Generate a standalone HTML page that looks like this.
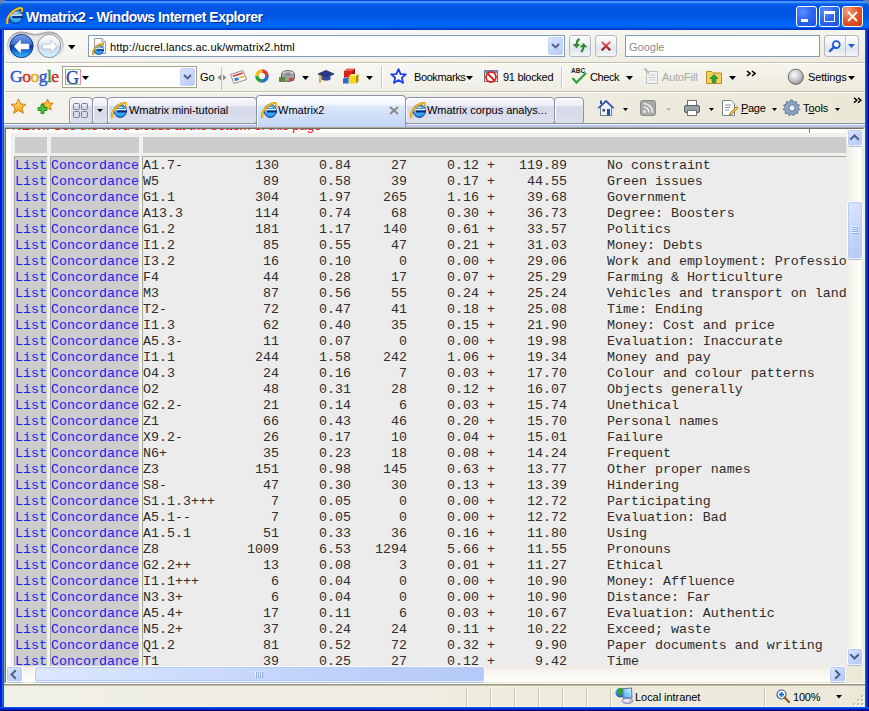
<!DOCTYPE html>
<html><head><meta charset="utf-8"><title>Wmatrix2 - Windows Internet Explorer</title>
<style>
*{margin:0;padding:0;box-sizing:border-box}
html,body{width:869px;height:711px;overflow:hidden}
body{position:relative;background:#0a3ed6;font-family:"Liberation Sans",sans-serif;font-size:11px;color:#000}
.a{position:absolute}
svg{position:absolute;overflow:visible}
/* title bar */
#title{left:0;top:0;width:869px;height:30px;border-radius:7px 7px 0 0;
background:linear-gradient(to bottom,#0a3ed6 0px,#0a3ed6 1px,#3d90fd 1px,#4196ff 3px,#2275f6 3px,#0d62ea 4px,#065ae6 5px,#0056e4 8px,#0054e2 13px,#0058e8 18px,#0063f6 22px,#0067fc 27px,#0050de 28px,#0038cb 29px,#0038cb 30px)}
#corner{left:0;top:0;width:869px;height:8px;background:#6e7ca4}
#ttext{left:26px;top:9px;font-weight:bold;font-size:14px;line-height:16px;color:#fff;white-space:nowrap;text-shadow:1px 1px 0 #0a2a90;letter-spacing:-0.45px}
.tbtn{top:6px;width:21px;height:21px;border:1px solid #fff;border-radius:3px;
background:radial-gradient(circle at 30% 25%,#5f8ffb 0%,#2f66f0 45%,#1b50e6 100%)}
#bclose{background:radial-gradient(circle at 25% 20%,#f4a080 0%,#e45a2c 45%,#cc3a10 100%)}
/* frame sides */
#fl{left:0;top:30px;width:4px;height:681px;background:linear-gradient(to right,#0019cf 0,#0019cf 2px,#166cf2 2px,#166cf2 3px,#0652e2 3px,#0652e2 4px)}
#fr{left:865px;top:30px;width:4px;height:681px;background:linear-gradient(to right,#0b55f2 0,#0b55f2 1px,#0040dc 1px,#0040dc 2px,#0020b0 2px,#0020b0 3px,#000c80 3px)}
#fb{left:0;top:707px;width:869px;height:4px;background:linear-gradient(to bottom,#0a54ee 0,#0a54ee 1px,#0038d8 1px,#0038d8 2px,#0018b0 2px,#0018b0 3px,#000c88 3px)}
/* toolbars */
#tb{left:4px;top:30px;width:861px;height:99px;background:linear-gradient(to right,#f3f2ed 0%,#eeede5 45%,#ebe8d7 100%)}
#addrrow{left:4px;top:30px;width:861px;height:32px;background:linear-gradient(to bottom,rgba(255,255,255,.5) 0,rgba(255,255,255,.15) 100%)}
.hl{height:1px;width:861px;left:4px}
#gbar{left:4px;top:63px;width:861px;height:28px;background:linear-gradient(to bottom,rgba(255,255,255,.55) 0,rgba(255,255,255,.1) 100%)}
#tabrow{left:4px;top:92px;width:861px;height:31px}
.ui{white-space:nowrap;font-size:11px;line-height:13px}
/* address */
#addr{left:88px;top:35px;width:477px;height:22px;background:#fff;border:1px solid #7f9db9}
#srch{left:625px;top:35px;width:195px;height:22px;background:#fff;border:1px solid #7f9db9}
.sbtn{border:1px solid #b4b7bf;border-radius:3px;background:linear-gradient(to bottom,#fdfdfd 0,#f1f2f5 35%,#dfe4ee 62%,#f4f5f8 100%)}
.ddb{background:linear-gradient(135deg,#d9e4fd 0,#b7cbf8 100%);border:1px solid #c5d4f6;border-radius:2px}
/* tabs */
.tab{top:97px;height:27px;border:1px solid #8d93a2;border-radius:4px 4px 3px 3px;background:linear-gradient(to bottom,#f8f9fc 0,#eceef5 30%,#d4d9e8 36%,#dde1ee 100%);box-shadow:inset 1px 1px 0 #fff}
#atab{top:95px;height:32px;border-bottom:none;border-radius:4px 4px 0 0;background:linear-gradient(to bottom,#ffffff 0,#f6f9fe 25%,#dbe6fa 35%,#c4d6f6 100%);border-color:#8d93a2}
/* content */
#cf{left:4px;top:127px;width:861px;height:557px;border-top:1px solid #aca899;border-left:1px solid #aca899;border-right:1px solid #f1efe2;border-bottom:1px solid #fff}
#cfi{left:5px;top:128px;width:859px;height:555px;border-top:1px solid #716f64;border-left:1px solid #716f64;border-right:1px solid #f1efe2;border-bottom:1px solid #f1efe2}
#view{left:6px;top:129px;width:840px;height:537px;background:#fff;overflow:hidden}
.mono{font-family:"Liberation Mono",monospace;font-size:13.333px;line-height:16px;white-space:pre}
#red{left:6px;top:-11px;color:#f00;font-size:13px;white-space:nowrap;font-family:"Liberation Sans",sans-serif}
#tbl{left:5px;top:4px;width:1200px;height:700px;background:#f0f0f0;border-top:1px solid #f1efe2;border-left:1px solid #f1efe2}
.hc{top:8px;height:16px;background:#cccccc}
.dc{top:27px;height:700px;border-top:1px solid #aca899;border-left:1px solid #aca899;border-right:1px solid #f1efe2}
/* scrollbars */
#vs{left:846px;top:129px;width:17px;height:537px;background:linear-gradient(to right,#eeeae0 0,#f6f4ee 5px,#fdfdf9 13px,#fdfdf9 16px,#e9e5d3 16px,#e9e5d3 17px)}
#hs{left:6px;top:666px;width:840px;height:17px;background:linear-gradient(to bottom,#eeeae0 0,#f6f4ee 5px,#fdfdf9 13px,#fdfdf9 16px,#e9e5d3 16px,#e9e5d3 17px)}
#corner2{left:846px;top:666px;width:17px;height:17px;background:#ece9d8}
.sb{border:1px solid #b8cbf5;border-radius:2px;background:linear-gradient(135deg,#dde8fe 0,#c6d6fb 50%,#b4c9f8 100%);box-shadow:0 0 0 1px rgba(255,255,255,.8),0 2px 0 0 #a9bedc}
/* status */
#status{left:4px;top:684px;width:861px;height:23px;border-top:1px solid #96937f;box-shadow:inset 0 1px 0 #c2bea9;border-bottom:1px solid #f5f3e8;background:linear-gradient(to right,#f1f0e8 0,#ece9d8 100%)}
.sep{top:688px;width:2px;height:18px;border-left:1px solid #c7c3b1;border-right:1px solid #fff}
</style></head><body>
<svg style="position:absolute;width:0;height:0" width="0" height="0"><defs>
<symbol id="ie" viewBox="0 0 16 16">
 <linearGradient id="ieg" x1="0" y1="0" x2="0" y2="1"><stop offset="0" stop-color="#8adcff"/><stop offset="1" stop-color="#1a90ea"/></linearGradient>
 <ellipse cx="9.3" cy="9" rx="6.2" ry="6.4" fill="url(#ieg)" stroke="#0a2a78" stroke-width=".9"/>
 <path d="M5.8 6.7C6.3 5 7.7 4.2 9.4 4.2S12.5 5 13 6.7Z" fill="#b8ecff" stroke="#0a3a90" stroke-width=".7"/>
 <path d="M4.4 7.5H15.4" stroke="#f0fbff" stroke-width="1.1"/>
 <path d="M6 9.5H15.7" stroke="#0a2a78" stroke-width="2"/>
 <path d="M1.9 16C.2 14.8.6 10.6 4.3 6.4 7.7 2.6 12.6.2 14.8 1.2c1.1.5.9 2-.2 3.5" stroke="#c8800a" stroke-width="2.3" fill="none"/>
 <path d="M1.9 16C.2 14.8.6 10.6 4.3 6.4 7.7 2.6 12.6.2 14.8 1.2c1.1.5.9 2-.2 3.5" stroke="#f8c828" stroke-width="1.3" fill="none"/>
</symbol></defs></svg>
<div class="a" id="corner"></div>
<div class="a" id="title"></div>
<svg style="left:6px;top:7px" width="17" height="17"><use href="#ie"/></svg>
<div class="a" id="ttext">Wmatrix2 - Windows Internet Explorer</div>
<div class="a tbtn" style="left:796px"><div class="a" style="left:4px;top:12px;width:7px;height:3px;background:#fff"></div></div>
<div class="a tbtn" style="left:819px"><div class="a" style="left:4px;top:4px;width:11px;height:11px;border:1px solid #fff;border-top-width:3px"></div></div>
<div class="a tbtn" id="bclose" style="left:842px"><svg style="left:4px;top:4px" width="11" height="11" viewBox="0 0 11 11"><path d="M1 1L10 10M10 1L1 10" stroke="#fff" stroke-width="1.8"/></svg></div>

<div class="a" id="fl"></div><div class="a" id="fr"></div><div class="a" id="fb"></div>
<div class="a" id="tb"></div>
<div class="a" id="addrrow"></div>
<div class="a hl" style="top:62px;background:#c5c1ad"></div>
<div class="a hl" style="top:63px;background:#fff"></div>
<div class="a" id="gbar"></div>
<div class="a hl" style="top:91px;background:#c5c1ad"></div>
<div class="a hl" style="top:92px;background:#fff"></div>
<div class="a" style="left:4px;top:30px;width:1px;height:93px;background:#fdfbf0"></div>

<!-- ADDRESS ROW -->
<svg style="left:6px;top:31px" width="60" height="31" viewBox="0 0 60 31">
 <defs>
  <linearGradient id="cap" x1="0" y1="0" x2="0" y2="1"><stop offset="0" stop-color="#a8a8a8"/><stop offset="0.5" stop-color="#d0d0d0"/><stop offset="1" stop-color="#f8f8f8"/></linearGradient>
  <linearGradient id="capi" x1="0" y1="0" x2="0" y2="1"><stop offset="0" stop-color="#e4e4e4"/><stop offset="1" stop-color="#f0f0f0"/></linearGradient>
  <linearGradient id="bk" x1="0" y1="0" x2="0" y2="1"><stop offset="0" stop-color="#7aa6e8"/><stop offset="0.42" stop-color="#3a6ccc"/><stop offset="0.5" stop-color="#0836a8"/><stop offset="0.6" stop-color="#0a4cc4"/><stop offset="1" stop-color="#3cc0ff"/></linearGradient>
  <linearGradient id="fw" x1="0" y1="0" x2="0" y2="1"><stop offset="0" stop-color="#ffffff"/><stop offset="0.45" stop-color="#e6ecf4"/><stop offset="0.52" stop-color="#cad6e6"/><stop offset="1" stop-color="#d4f6ff"/></linearGradient>
 </defs>
 <path d="M15.5 1.4C20.5 1.4 24.5 3.8 29.4 3.8S38.3 1.4 43.3 1.4C51 1.4 57.2 7.5 57.2 15S51 28.3 43.3 28.3C38.3 28.3 34.3 26.6 29.4 26.6S20.5 28.3 15.5 28.3C7.8 28.3 1.6 22.5 1.6 15S7.8 1.4 15.5 1.4Z" fill="url(#capi)" stroke="url(#cap)" stroke-width="1.6"/>
 <circle cx="15.5" cy="15" r="11.6" fill="url(#bk)" stroke="#0a2a78" stroke-width="0.9"/>
 <circle cx="43.3" cy="15" r="11.6" fill="url(#fw)" stroke="#7c8896" stroke-width="0.9"/>
 <path d="M8.2 15.5L14.5 9.2V13.1H22.9V17.9H14.5V21.8Z" fill="#fff" stroke="#fff" stroke-width="0.6" stroke-linejoin="round"/>
 <path d="M51 15.5L44.7 9.2V13.1H36.3V17.9H44.7V21.8Z" fill="#fff" stroke="#b4bcc8" stroke-width="0.8" stroke-linejoin="round"/>
</svg>
<svg style="left:68px;top:45px" width="8" height="5"><path d="M0 0H7.5L3.75 4.5Z" fill="#000"/></svg>
<div class="a" id="addr"></div>
<svg style="left:92px;top:38px" width="15" height="17" viewBox="0 0 15 17">
 <path d="M2.5 .5H10L13.5 4V15.5H2.5Z" fill="#fff" stroke="#9a9a9a"/><path d="M10 .5V4H13.5" fill="#e8e8e8" stroke="#9a9a9a"/>
</svg><svg style="left:92px;top:43px" width="12" height="12"><use href="#ie"/></svg>
<div class="a ui" style="left:110px;top:41px;color:#000;letter-spacing:0.12px">http://ucrel.lancs.ac.uk/wmatrix2.html</div>
<div class="a ddb" style="left:548px;top:37px;width:15px;height:18px"></div>
<svg style="left:551px;top:43px" width="9" height="6"><path d="M1 1L4.5 4.5L8 1" stroke="#4d6185" stroke-width="1.8" fill="none"/></svg>
<div class="a sbtn" style="left:569px;top:35px;width:22px;height:22px"></div>
<svg style="left:569px;top:35px" width="22" height="22" viewBox="0 0 22 22">
 <path d="M10.5 4C9 4.8 7.6 6.5 7.6 9.5" stroke="#2a8c2a" stroke-width="2" fill="none"/>
 <path d="M3.6 9H11.4L7.5 13.2Z" fill="#2a8c2a"/>
 <path d="M14.5 11C14.5 13.8 14 15.6 12 17" stroke="#2a8c2a" stroke-width="2" fill="none"/>
 <path d="M10.6 12.2H18.4L14.5 8Z" fill="#2a8c2a"/>
</svg>
<div class="a sbtn" style="left:595px;top:35px;width:22px;height:22px"></div>
<svg style="left:595px;top:35px" width="22" height="22" viewBox="0 0 22 22">
 <defs><linearGradient id="xg" x1="0" y1="0" x2="0" y2="1"><stop offset="0" stop-color="#f07878"/><stop offset="1" stop-color="#900c0c"/></linearGradient></defs>
 <path d="M6.8 6.8L15.2 15.2M15.2 6.8L6.8 15.2" stroke="url(#xg)" stroke-width="2.3"/>
</svg>
<div class="a" id="srch"></div>
<div class="a ui" style="left:629px;top:41px;color:#8c8c8c">Google</div>
<div class="a sbtn" style="left:824px;top:35px;width:35px;height:22px"></div>
<div class="a" style="left:845px;top:36px;width:1px;height:20px;background:#c9c7ba"></div>
<svg style="left:828px;top:39px" width="14" height="14" viewBox="0 0 14 14"><circle cx="8.3" cy="5.6" r="3.4" stroke="#1a56d8" stroke-width="1.8" fill="#fff"/><path d="M6 8L2 12" stroke="#1a56d8" stroke-width="2.4" stroke-linecap="round"/></svg>
<svg style="left:848px;top:44px" width="8" height="5"><path d="M0 0H7L3.5 4Z" fill="#2a5ad8"/></svg>


<!-- GOOGLE ROW -->
<div class="a" style="left:10px;top:66px;font-family:'Liberation Serif',serif;font-weight:normal;font-size:17.5px;line-height:21px;letter-spacing:-0.5px;-webkit-text-stroke:0.45px;white-space:nowrap"><span style="color:#2c5bd0">G</span><span style="color:#d63222">o</span><span style="color:#e2ad10">o</span><span style="color:#2c5bd0">g</span><span style="color:#2a9a38">l</span><span style="color:#d63222">e</span></div>
<div class="a" style="left:62px;top:66px;width:135px;height:22px;background:#fff;border:1px solid #a5a18c"></div>
<div class="a" style="left:65px;top:69px;width:16px;height:16px;border-top:1px solid #90d090;border-left:1px solid #9090f0;border-right:1px solid #f09090;border-bottom:1px solid #90d090"></div>
<div class="a" style="left:66px;top:68px;font-family:'Liberation Serif',serif;font-size:18px;line-height:20px;color:#2c4aa8;-webkit-text-stroke:0.3px">G</div>
<svg style="left:82px;top:76px" width="8" height="5"><path d="M0 0H7L3.5 4Z" fill="#000"/></svg>
<div class="a ddb" style="left:180px;top:68px;width:15px;height:18px"></div>
<svg style="left:183px;top:74px" width="9" height="6"><path d="M1 1L4.5 4.5L8 1" stroke="#4d6185" stroke-width="1.8" fill="none"/></svg>
<div class="a ui" style="left:200px;top:71px">Go</div>
<div class="a" style="left:221px;top:67px;width:1px;height:23px;background:#c8c3ae"></div>
<svg style="left:217px;top:74px" width="10" height="8"><path d="M4 0.5L0.5 3.5L4 6.5Z M6 0.5L9.5 3.5L6 6.5Z" fill="#8e8e8e"/></svg>
<svg style="left:229px;top:68px" width="19" height="18" viewBox="0 0 19 18">
 <path d="M1.5 6.5L14 2.5L17.5 11.5L5 15.5Z" fill="#fff" stroke="#8c8c8c"/>
 <path d="M3.5 7.5L13.5 4.3L14 5.8L4 9Z" fill="#d63030"/><path d="M5 10.5L9 9.2L10 12L6 13.3Z" fill="#3a7ad8"/><path d="M10 9L15 7.5L15.5 9L10.5 10.5Z" fill="#f0b020"/>
</svg>
<svg style="left:253px;top:67px" width="18" height="18" viewBox="0 0 18 18">
 <path d="M9 2.2A6.8 6.8 0 0 1 15.8 9L12.3 9.6A3.4 3.4 0 0 0 8.4 5.7Z" fill="#e23a2e"/>
 <path d="M15.8 9A6.8 6.8 0 0 1 9 15.8L8.4 12.3A3.4 3.4 0 0 0 12.3 8.4Z" fill="#2f6ad8"/>
 <path d="M9 15.8A6.8 6.8 0 0 1 2.2 9L5.7 8.4A3.4 3.4 0 0 0 9.6 12.3Z" fill="#2aa040"/>
 <path d="M2.2 9A6.8 6.8 0 0 1 9 2.2L9.6 5.7A3.4 3.4 0 0 0 5.7 9.6Z" fill="#f0c020"/>
</svg>
<svg style="left:278px;top:68px" width="18" height="17" viewBox="0 0 18 17">
 <ellipse cx="10" cy="6" rx="6.5" ry="3.5" fill="#c8c8c8" stroke="#707070"/>
 <path d="M3.5 6V10C3.5 12 6.5 13.5 10 13.5S16.5 12 16.5 10V6" fill="#a0a0a0" stroke="#606060"/>
 <ellipse cx="10" cy="6" rx="3" ry="1.5" fill="#888"/>
 <rect x="1" y="9" width="6" height="5" fill="#5a8a3a"/><rect x="11" y="10" width="5" height="3" fill="#d84030"/>
</svg>
<svg style="left:302px;top:76px" width="8" height="5"><path d="M0 0H7L3.5 4Z" fill="#000"/></svg>
<svg style="left:317px;top:68px" width="18" height="17" viewBox="0 0 18 17">
 <path d="M1 6L9 2.5L17 6L9 9.5Z" fill="#2a3a8a" stroke="#1a2460" stroke-width="0.8"/>
 <path d="M4.5 7.5V11.5C6 13 12 13 13.5 11.5V7.5L9 9.5Z" fill="#3a4a9a"/>
 <path d="M3 6.8V13" stroke="#d8a020" stroke-width="1.4"/><circle cx="3" cy="13.5" r="1.2" fill="#d8a020"/>
</svg>
<svg style="left:342px;top:67px" width="18" height="18" viewBox="0 0 18 18">
 <path d="M2 4L5 1.5H13L10 4Z" fill="#f06050"/><path d="M10 4L13 1.5V9.5L10 12Z" fill="#a01810"/><rect x="2" y="4" width="8" height="8" fill="#d82418"/>
 <path d="M7 9L9.5 7H16.5L14 9Z" fill="#fff480"/><path d="M14 9L16.5 7V14.5L14 16.5Z" fill="#b09000"/><rect x="7" y="9" width="7" height="7.5" fill="#f4d818"/>
 <path d="M1 11.5L2.5 10.3H7.5L6 11.5Z" fill="#80b0ff"/><rect x="1" y="11.5" width="5.5" height="5" fill="#2a68d0"/>
</svg>
<svg style="left:366px;top:76px" width="8" height="5"><path d="M0 0H7L3.5 4Z" fill="#000"/></svg>
<div class="a" style="left:381px;top:66px;width:1px;height:22px;background:#cfcab5;box-shadow:1px 0 0 #fff"></div>
<svg style="left:390px;top:68px" width="17" height="17" viewBox="0 0 17 17"><path d="M8.5 1.2L10.6 6.1L15.8 6.4L11.8 9.8L13.1 14.9L8.5 12.1L3.9 14.9L5.2 9.8L1.2 6.4L6.4 6.1Z" fill="#fff" stroke="#1b3ee6" stroke-width="1.8" stroke-linejoin="round"/></svg>
<div class="a ui" style="left:414px;top:71px;letter-spacing:-0.4px">Bookmarks</div>
<svg style="left:466px;top:76px" width="8" height="5"><path d="M0 0H7L3.5 4Z" fill="#000"/></svg>
<svg style="left:483px;top:68px" width="17" height="17" viewBox="0 0 17 17">
 <rect x="1.5" y="2.5" width="13" height="11" fill="#fff" stroke="#707070"/><rect x="1.5" y="2.5" width="13" height="2.5" fill="#6a8ad0"/>
 <circle cx="8" cy="9" r="5" fill="none" stroke="#e02020" stroke-width="1.8"/><path d="M4.5 5.5L11.5 12.5" stroke="#e02020" stroke-width="1.8"/>
</svg>
<div class="a ui" style="left:503px;top:71px;letter-spacing:-0.3px">91 blocked</div>
<div class="a" style="left:561px;top:67px;width:1px;height:22px;background:#cfcab5;box-shadow:1px 0 0 #fff"></div>
<svg style="left:570px;top:67px" width="18" height="18" viewBox="0 0 18 18">
 <text x="1" y="6" font-family="Liberation Sans" font-size="6.5" font-weight="bold" fill="#222">ABC</text>
 <path d="M2.5 11L6.5 15.5L16 6" stroke="#3aa040" stroke-width="2.4" fill="none"/>
</svg>
<div class="a ui" style="left:590px;top:71px;letter-spacing:-0.4px">Check</div>
<svg style="left:626px;top:76px" width="8" height="5"><path d="M0 0H7L3.5 4Z" fill="#000"/></svg>
<svg style="left:643px;top:67px" width="16" height="18" viewBox="0 0 16 18">
 <path d="M3.5 4.5H14.5V16.5H3.5Z" fill="#f4f4f4" stroke="#c0c0c0"/><path d="M5.5 8H12.5M5.5 10.5H12.5M5.5 13H12.5" stroke="#c8c8c8"/>
 <path d="M1.5 1.5L6 6" stroke="#b8b8b8" stroke-width="2"/>
</svg>
<div class="a ui" style="left:662px;top:71px;color:#a8a8a8;letter-spacing:-0.15px">AutoFill</div>
<svg style="left:705px;top:67px" width="18" height="18" viewBox="0 0 18 18">
 <path d="M1.5 4.5H7L8.5 6H16.5V16.5H1.5Z" fill="#f2d060" stroke="#b89020"/>
 <path d="M9 7.5L13 11.5H10.8V15.5H7.2V11.5H5Z" fill="#28a830" stroke="#10701a" stroke-width="0.6"/>
</svg>
<svg style="left:729px;top:76px" width="8" height="5"><path d="M0 0H7L3.5 4Z" fill="#000"/></svg>
<svg style="left:746px;top:70px" width="12" height="7" viewBox="0 0 12 7"><path d="M1 1L4 3.5L1 6M6 1L9 3.5L6 6" stroke="#000" stroke-width="1.6" fill="none"/></svg>
<svg style="left:787px;top:68px" width="18" height="18" viewBox="0 0 18 18">
 <defs><radialGradient id="sg" cx="0.4" cy="0.35" r="0.7"><stop offset="0" stop-color="#fafafa"/><stop offset="0.6" stop-color="#c4c4c4"/><stop offset="1" stop-color="#8a8a8a"/></radialGradient></defs>
 <circle cx="8.8" cy="8.8" r="7.6" fill="url(#sg)" stroke="#6e6e6e"/>
</svg>
<div class="a ui" style="left:808px;top:71px;letter-spacing:-0.15px">Settings</div>
<svg style="left:848px;top:76px" width="8" height="5"><path d="M0 0H7L3.5 4Z" fill="#000"/></svg>


<!-- TAB ROW -->
<div class="a" style="left:4px;top:123px;width:861px;height:1px;background:#8c929f"></div>
<div class="a" style="left:4px;top:124px;width:861px;height:1px;background:#eef2fc"></div>
<div class="a" style="left:4px;top:125px;width:861px;height:2px;background:#b5c8f4"></div>
<svg style="left:10px;top:98px" width="17" height="17" viewBox="0 0 17 17">
 <defs><linearGradient id="st" x1="0" y1="0" x2="0" y2="1"><stop offset="0" stop-color="#ffe27a"/><stop offset="1" stop-color="#f0a010"/></linearGradient></defs>
 <path d="M8.5 1L10.7 6L16 6.4L12 9.8L13.3 15.2L8.5 12.4L3.7 15.2L5 9.8L1 6.4L6.3 6Z" fill="url(#st)" stroke="#c8780a" stroke-width="0.9" stroke-linejoin="round"/>
</svg>
<svg style="left:37px;top:98px" width="17" height="17" viewBox="0 0 17 17">
 <path d="M10.5 1L12.2 5L16.2 5.3L13.2 7.9L14.2 12L10.5 9.8L6.8 12L7.8 7.9L4.8 5.3L8.8 5Z" fill="#f6c030" stroke="#c8780a" stroke-width="0.9" stroke-linejoin="round"/>
 <path d="M4 6.5H7V9.5H10V12.5H7V15.5H4V12.5H1V9.5H4Z" fill="#48c040" stroke="#1e8a1e" stroke-width="0.9" stroke-linejoin="round"/>
</svg>
<div class="a tab" style="left:69px;width:24px"></div>
<svg style="left:73px;top:103px" width="16" height="16" viewBox="0 0 16 16"><g fill="none" stroke="#7a7f8c"><rect x="0.5" y="0.5" width="6" height="6" rx="1.3"/><rect x="8.5" y="0.5" width="6" height="6" rx="1.3"/><rect x="0.5" y="8.5" width="6" height="6" rx="1.3"/><rect x="8.5" y="8.5" width="6" height="6" rx="1.3"/></g></svg>
<div class="a tab" style="left:92px;width:16px"></div>
<svg style="left:97px;top:109px" width="7" height="4"><path d="M0 0H6L3 3Z" fill="#000"/></svg>
<div class="a tab" style="left:107px;width:150px"></div>
<svg style="left:111px;top:102px" width="16" height="16"><use href="#ie"/></svg>
<div class="a ui" style="left:129px;top:104px;color:#000;letter-spacing:-0.05px">Wmatrix mini-tutorial</div>
<div class="a tab" style="left:405px;width:150px"></div>
<svg style="left:410px;top:102px" width="16" height="16"><use href="#ie"/></svg>
<div class="a ui" style="left:427px;top:104px;color:#000;letter-spacing:-0.02px">Wmatrix corpus analys...</div>
<div class="a tab" style="left:554px;width:30px"></div>
<div class="a tab" id="atab" style="left:256px;width:150px"></div>
<svg style="left:261px;top:102px" width="16" height="16"><use href="#ie"/></svg>
<div class="a ui" style="left:278px;top:104px;color:#000">Wmatrix2</div>
<svg style="left:389px;top:106px" width="10" height="9" viewBox="0 0 10 9"><path d="M1 1L9 8M9 1L1 8" stroke="#8a8a8a" stroke-width="2"/></svg>
<svg style="left:597px;top:99px" width="18" height="18" viewBox="0 0 18 18">
 <path d="M3.5 8V16.5H14.5V8L9 3Z" fill="#eef1f6" stroke="#5a6e96" stroke-width="0.9"/>
 <path d="M1.2 9.2L9 1.8L16.8 9.2" fill="none" stroke="#2850b0" stroke-width="1.5" stroke-linejoin="round"/>
 <rect x="10" y="10" width="3" height="6.5" fill="#1e50b8"/><rect x="5.5" y="10" width="2.5" height="2.5" fill="#3a4a6a"/>
 <rect x="3" y="1.5" width="2" height="3.5" fill="#2850b0"/>
</svg>
<svg style="left:623px;top:108px" width="6" height="4"><path d="M0 0H5L2.5 3Z" fill="#000"/></svg>
<svg style="left:640px;top:100px" width="16" height="16" viewBox="0 0 16 16">
 <rect x="0.5" y="0.5" width="15" height="15" rx="2" fill="#a9a9a9" stroke="#8c8c8c"/>
 <circle cx="4.5" cy="11.5" r="1.5" fill="#eee"/><path d="M3.5 7A5.5 5.5 0 0 1 9 12.5M3.5 3.5A9 9 0 0 1 12.5 12.5" stroke="#eee" stroke-width="1.6" fill="none"/>
</svg>
<svg style="left:666px;top:108px" width="6" height="4"><path d="M0 0H5L2.5 3Z" fill="#b8b8b8"/></svg>
<svg style="left:683px;top:99px" width="18" height="18" viewBox="0 0 18 18">
 <rect x="4.5" y="1.5" width="9" height="5" fill="#fff" stroke="#707070"/>
 <rect x="1.5" y="6.5" width="15" height="7" rx="1.5" fill="#9aa0a8" stroke="#5a6068"/>
 <rect x="4.5" y="11.5" width="9" height="5" fill="#fff" stroke="#707070"/>
</svg>
<svg style="left:709px;top:108px" width="6" height="4"><path d="M0 0H5L2.5 3Z" fill="#000"/></svg>
<svg style="left:721px;top:99px" width="18" height="18" viewBox="0 0 18 18">
 <path d="M1.5 1.5H10L13.5 5V16.5H1.5Z" fill="#fff" stroke="#7a8494"/>
 <path d="M4 6H10M4 8.5H9M4 11H8" stroke="#8a94a4"/>
 <path d="M9 14L15.5 7.5L17 9L10.5 15.5L8.5 16Z" fill="#f2c23a" stroke="#906010" stroke-width="0.7"/>
</svg>
<div class="a ui" style="left:741px;top:102px;letter-spacing:-0.3px"><u>P</u>age</div>
<svg style="left:772px;top:108px" width="6" height="4"><path d="M0 0H5L2.5 3Z" fill="#000"/></svg>
<svg style="left:783px;top:99px" width="18" height="18" viewBox="0 0 18 18">
 <path d="M9 1L10.3 3.4L13 2.6L13.2 5.3L15.9 6L14.6 8.5L16.5 10.5L14 11.6L14.3 14.4L11.5 14.2L10.3 16.7L8 15.1L5.7 16.7L4.5 14.2L1.7 14.4L2 11.6L-.5 10.5L1.4 8.5L.1 6L2.8 5.3L3 2.6L5.7 3.4L7 1Z" transform="translate(0.5 0)" fill="#8fa4c4" stroke="#5a7090" stroke-width="0.9"/>
 <circle cx="9" cy="9" r="3.2" fill="#eef2f8" stroke="#5a7090"/>
</svg>
<div class="a ui" style="left:803px;top:102px;letter-spacing:-0.1px">T<u>o</u>ols</div>
<svg style="left:835px;top:108px" width="6" height="4"><path d="M0 0H5L2.5 3Z" fill="#000"/></svg>
<svg style="left:853px;top:97px" width="10" height="7" viewBox="0 0 10 7"><path d="M1 .8L3.8 3.3L1 5.8M5 .8L7.8 3.3L5 5.8" stroke="#000" stroke-width="1.5" fill="none"/></svg>


<!-- CONTENT -->
<div class="a" id="cf"></div>
<div class="a" id="cfi"></div>
<div class="a" id="view">
  <div class="a" style="left:803px;top:0;width:1px;height:4px;background:#7c7c7c"></div>
  <div class="a" id="red">NEW!: See the word clouds at the bottom of this page</div>
  <div class="a" id="tbl"></div>
  <div class="a hc" style="left:9px;width:32px"></div>
  <div class="a hc" style="left:45px;width:88px"></div>
  <div class="a hc" style="left:137px;width:1000px"></div>
  <div class="a dc" style="left:8px;width:34px;background:#cccccc"></div>
  <div class="a dc" style="left:44px;width:90px;background:#cccccc"></div>
  <div class="a dc" style="left:136px;width:1000px;background:#ececec"></div>
  <div class="a mono" style="left:9px;top:29px;color:#2222f2">List
List
List
List
List
List
List
List
List
List
List
List
List
List
List
List
List
List
List
List
List
List
List
List
List
List
List
List
List
List
List
List
List</div>
  <div class="a mono" style="left:45px;top:29px;color:#2222f2">Concordance
Concordance
Concordance
Concordance
Concordance
Concordance
Concordance
Concordance
Concordance
Concordance
Concordance
Concordance
Concordance
Concordance
Concordance
Concordance
Concordance
Concordance
Concordance
Concordance
Concordance
Concordance
Concordance
Concordance
Concordance
Concordance
Concordance
Concordance
Concordance
Concordance
Concordance
Concordance
Concordance</div>
  <div class="a mono" style="left:137px;top:29px;color:#2c2c2c">A1.7-         130     0.84     27     0.12 +   119.89     No constraint
W5             89     0.58     39     0.17 +    44.55     Green issues
G1.1          304     1.97    265     1.16 +    39.68     Government
A13.3         114     0.74     68     0.30 +    36.73     Degree: Boosters
G1.2          181     1.17    140     0.61 +    33.57     Politics
I1.2           85     0.55     47     0.21 +    31.03     Money: Debts
I3.2           16     0.10      0     0.00 +    29.06     Work and employment: Professionalism
F4             44     0.28     17     0.07 +    25.29     Farming &amp; Horticulture
M3             87     0.56     55     0.24 +    25.24     Vehicles and transport on land
T2-            72     0.47     41     0.18 +    25.08     Time: Ending
I1.3           62     0.40     35     0.15 +    21.90     Money: Cost and price
A5.3-          11     0.07      0     0.00 +    19.98     Evaluation: Inaccurate
I1.1          244     1.58    242     1.06 +    19.34     Money and pay
O4.3           24     0.16      7     0.03 +    17.70     Colour and colour patterns
O2             48     0.31     28     0.12 +    16.07     Objects generally
G2.2-          21     0.14      6     0.03 +    15.74     Unethical
Z1             66     0.43     46     0.20 +    15.70     Personal names
X9.2-          26     0.17     10     0.04 +    15.01     Failure
N6+            35     0.23     18     0.08 +    14.24     Frequent
Z3            151     0.98    145     0.63 +    13.77     Other proper names
S8-            47     0.30     30     0.13 +    13.39     Hindering
S1.1.3+++       7     0.05      0     0.00 +    12.72     Participating
A5.1--          7     0.05      0     0.00 +    12.72     Evaluation: Bad
A1.5.1         51     0.33     36     0.16 +    11.80     Using
Z8           1009     6.53   1294     5.66 +    11.55     Pronouns
G2.2++         13     0.08      3     0.01 +    11.27     Ethical
I1.1+++         6     0.04      0     0.00 +    10.90     Money: Affluence
N3.3+           6     0.04      0     0.00 +    10.90     Distance: Far
A5.4+          17     0.11      6     0.03 +    10.67     Evaluation: Authentic
N5.2+          37     0.24     24     0.11 +    10.22     Exceed; waste
Q1.2           81     0.52     72     0.32 +     9.90     Paper documents and writing
T1             39     0.25     27     0.12 +     9.42     Time
B1             33     0.21     19     0.08 +     9.30     Anatomy and physiology</div>
</div>

<!-- SCROLLBARS -->
<div class="a" id="vs"></div>
<div class="a" id="hs"></div>
<div class="a" id="corner2"></div>
<div class="a sb" style="left:848px;top:130px;width:14px;height:15px"></div>
<svg style="left:849px;top:134px" width="11" height="7" viewBox="0 0 11 7"><path d="M1.2 5.8L5.5 1.5L9.8 5.8" stroke="#4d6185" stroke-width="2" fill="none"/></svg>
<div class="a sb" style="left:848px;top:202px;width:14px;height:56px"></div>
<svg style="left:851px;top:226px" width="8" height="8" viewBox="0 0 8 8"><path d="M0 .5H6M0 2.5H6M0 4.5H6M0 6.5H6" stroke="#eef3fe" stroke-width="1"/><path d="M1 1.5H7M1 3.5H7M1 5.5H7M1 7.5H7" stroke="#8faae8" stroke-width="1"/></svg>
<div class="a sb" style="left:848px;top:649px;width:14px;height:15px"></div>
<svg style="left:849px;top:653px" width="11" height="7" viewBox="0 0 11 7"><path d="M1.2 1.2L5.5 5.5L9.8 1.2" stroke="#4d6185" stroke-width="2" fill="none"/></svg>
<div class="a sb" style="left:7px;top:667px;width:15px;height:14px"></div>
<svg style="left:10px;top:669px" width="7" height="11" viewBox="0 0 7 11"><path d="M5.8 1.2L1.5 5.5L5.8 9.8" stroke="#4d6185" stroke-width="2" fill="none"/></svg>
<div class="a sb" style="left:35px;top:667px;width:449px;height:14px"></div>
<svg style="left:255px;top:671px" width="9" height="7" viewBox="0 0 9 7"><path d="M.5 0V6M2.5 0V6M4.5 0V6M6.5 0V6" stroke="#eef3fe" stroke-width="1"/><path d="M1.5 1V7M3.5 1V7M5.5 1V7M7.5 1V7" stroke="#8faae8" stroke-width="1"/></svg>
<div class="a sb" style="left:830px;top:667px;width:15px;height:14px"></div>
<svg style="left:834px;top:669px" width="7" height="11" viewBox="0 0 7 11"><path d="M1.2 1.2L5.5 5.5L1.2 9.8" stroke="#4d6185" stroke-width="2" fill="none"/></svg>


<!-- STATUS -->
<div class="a" id="status"></div>
<div class="a sep" style="left:466px"></div>
<div class="a sep" style="left:490px"></div>
<div class="a sep" style="left:514px"></div>
<div class="a sep" style="left:538px"></div>
<div class="a sep" style="left:562px"></div>
<div class="a sep" style="left:586px"></div>
<div class="a sep" style="left:610px"></div>
<div class="a sep" style="left:764px"></div>
<svg style="left:613px;top:684px" width="24" height="24" viewBox="0 0 24 24">
 <defs>
  <radialGradient id="glb" cx="0.4" cy="0.3" r="0.8"><stop offset="0" stop-color="#6ab8ff"/><stop offset="1" stop-color="#0a3aa0"/></radialGradient>
  <linearGradient id="scr" x1="1" y1="0" x2="0" y2="1"><stop offset="0" stop-color="#d8fbff"/><stop offset="1" stop-color="#38a0f0"/></linearGradient>
  <radialGradient id="bse" cx="0.4" cy="0.4" r="0.7"><stop offset="0" stop-color="#ffffff"/><stop offset="1" stop-color="#a8a0d0"/></radialGradient>
 </defs>
 <circle cx="7.2" cy="8.7" r="4.7" fill="url(#glb)"/>
 <path d="M4 6.5C5 4.5 7.5 3.5 10 4.5L10.5 9.5C9 11 8 12 6.8 11 6 9.5 5.5 8 4 6.5Z" fill="#2aa830"/>
 <path d="M9.8 4.8L18.5 4L19 13.8L10 14.3Z" fill="url(#scr)" stroke="#6a6090" stroke-width="0.9"/>
 <path d="M12.5 14.3H16.5L17 15.5H12Z" fill="#9a90c0"/>
 <ellipse cx="14.5" cy="16.9" rx="5.4" ry="2.6" fill="url(#bse)" stroke="#7a70a8" stroke-width="0.8"/>
</svg>
<div class="a ui" style="left:635px;top:691px;letter-spacing:-0.05px">Local intranet</div>
<svg style="left:776px;top:689px" width="15" height="15" viewBox="0 0 15 15">
 <circle cx="5.5" cy="5.5" r="4.5" fill="#fff" stroke="#3a5a98" stroke-width="1.2"/><path d="M3 5.5H8M5.5 3V8" stroke="#1e6ad8" stroke-width="1.8"/>
 <path d="M8.5 8.5L13 13" stroke="#8a5a20" stroke-width="2.2" stroke-linecap="round"/>
</svg>
<div class="a ui" style="left:793px;top:691px;letter-spacing:-0.2px">100%</div>
<svg style="left:836px;top:695px" width="7" height="4"><path d="M0 0H6L3 3.5Z" fill="#000"/></svg>
<svg style="left:852px;top:694px" width="13" height="13" viewBox="0 0 13 13"><g fill="#fff"><rect x="10" y="2" width="2" height="2"/><rect x="6" y="6" width="2" height="2"/><rect x="10" y="6" width="2" height="2"/><rect x="2" y="10" width="2" height="2"/><rect x="6" y="10" width="2" height="2"/><rect x="10" y="10" width="2" height="2"/></g><g fill="#c4bfa8"><rect x="9" y="1" width="2" height="2"/><rect x="5" y="5" width="2" height="2"/><rect x="9" y="5" width="2" height="2"/><rect x="1" y="9" width="2" height="2"/><rect x="5" y="9" width="2" height="2"/><rect x="9" y="9" width="2" height="2"/></g></svg>

</body></html>
